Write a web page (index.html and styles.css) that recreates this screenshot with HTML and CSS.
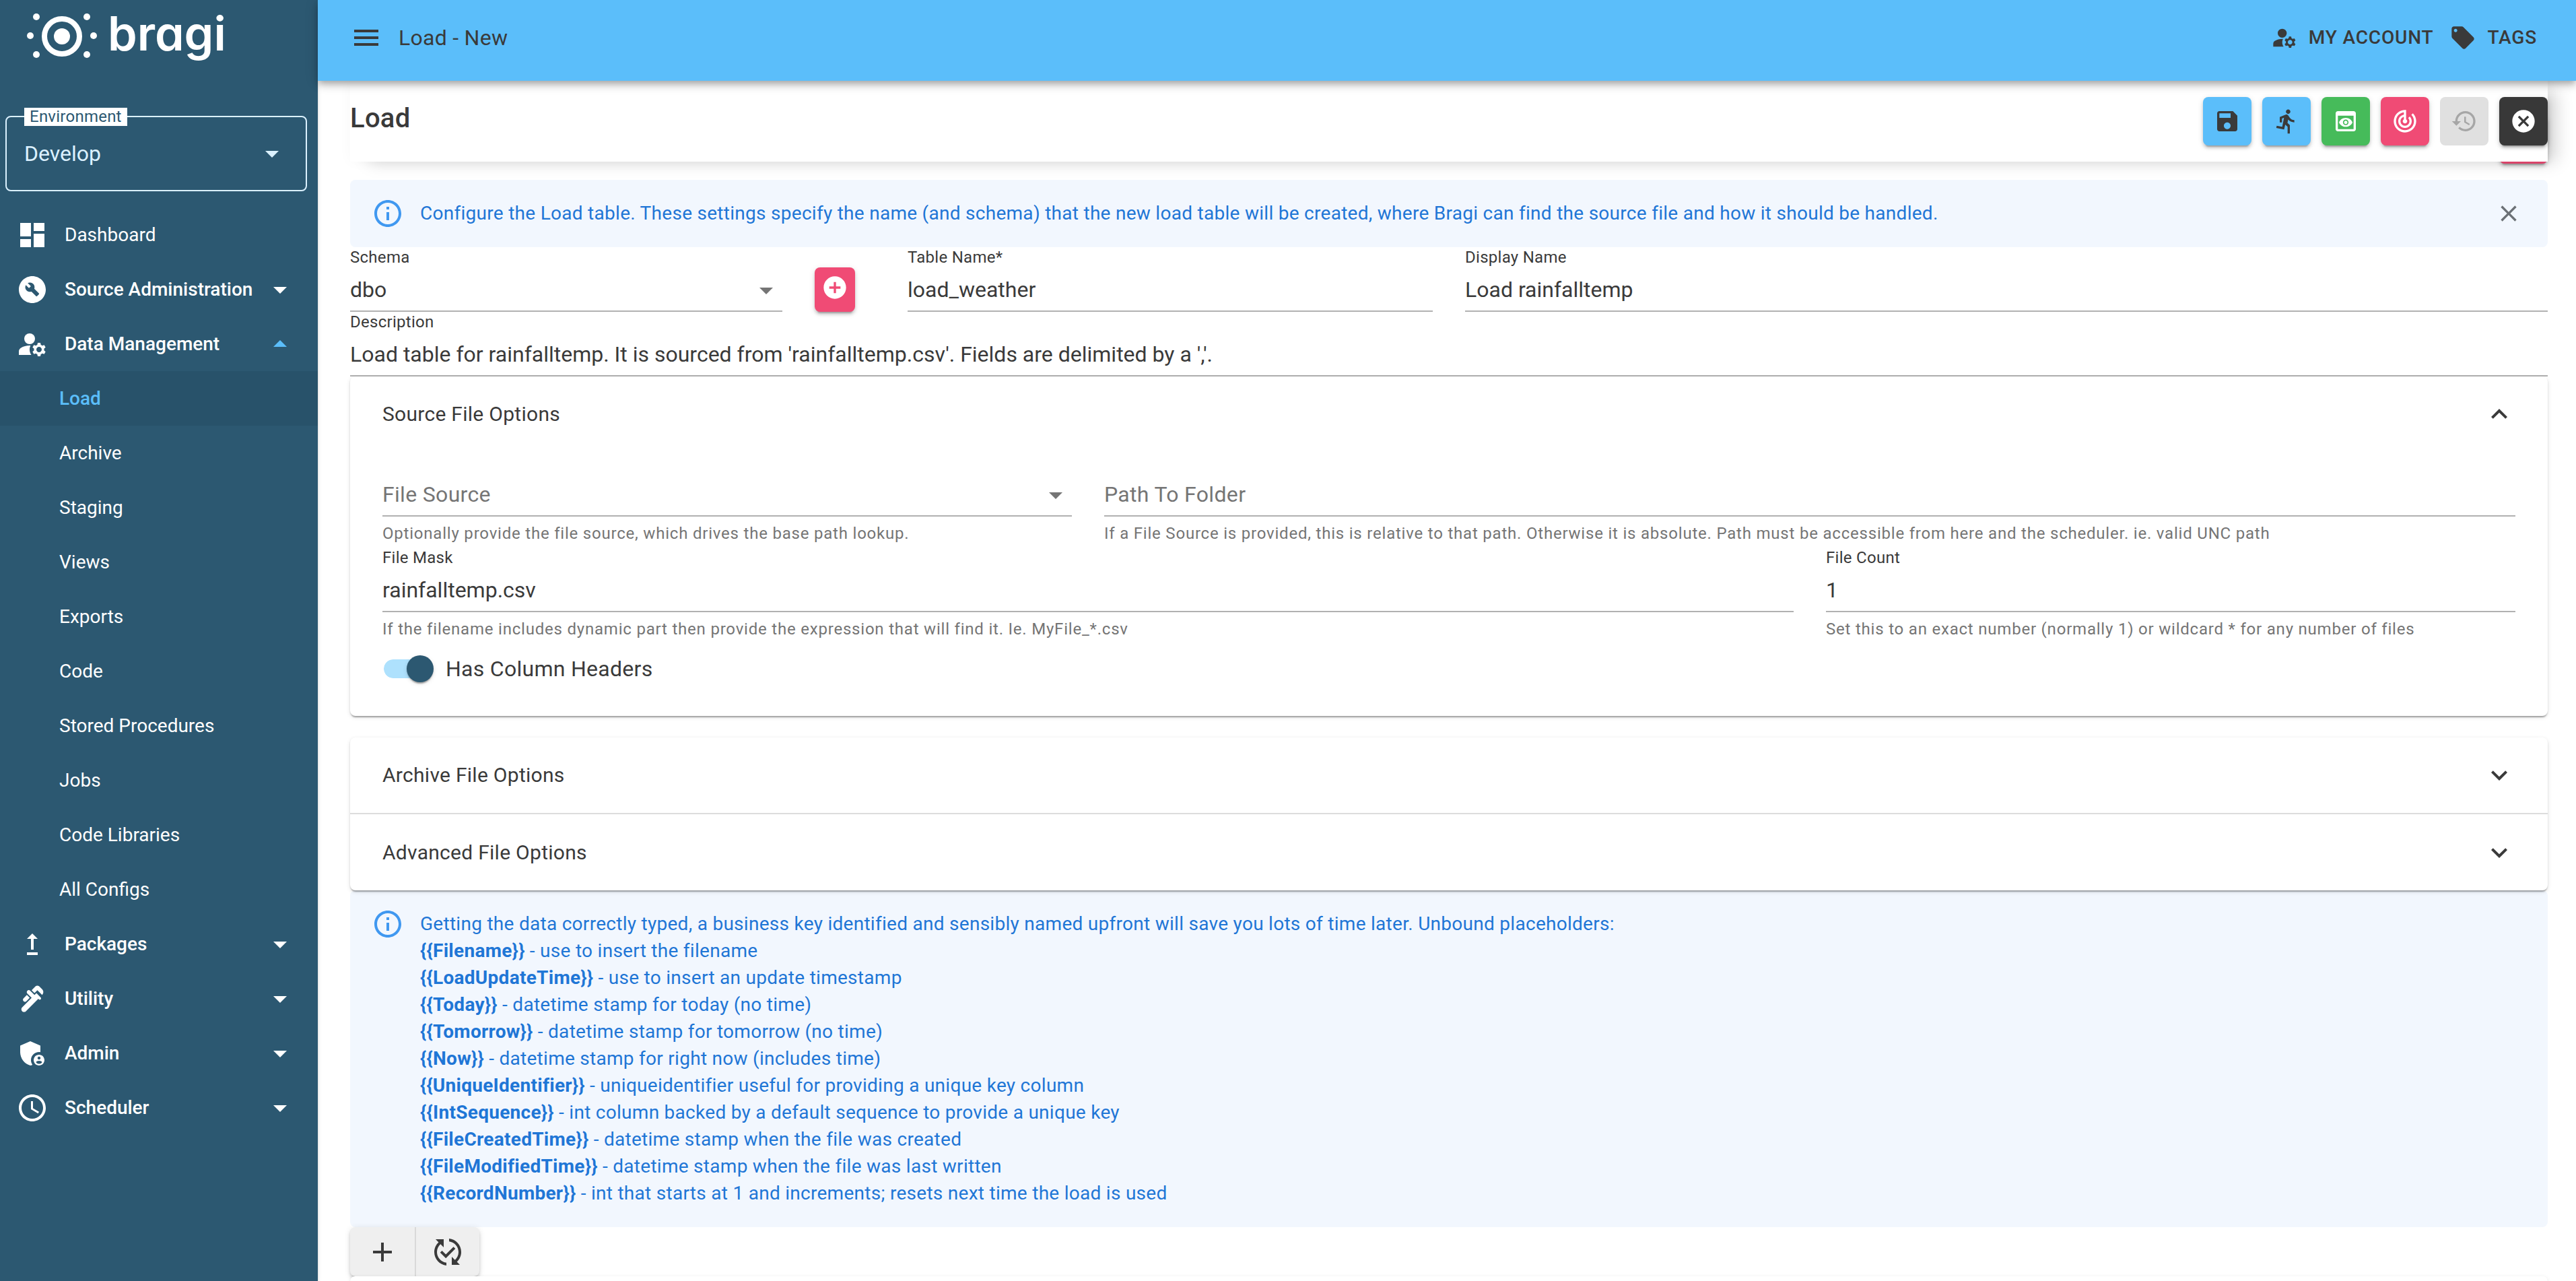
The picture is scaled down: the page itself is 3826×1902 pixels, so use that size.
FILE: index.html
```html
<!DOCTYPE html>
<html lang="en">
<head>
  <meta charset="UTF-8">
  <title>Load - New</title>
  <meta name="viewport" content="width=device-width, initial-scale=1.0">
  <link rel="stylesheet" href="styles.css">
</head>
<body>
  <!-- Icons shared by the whole page -->
  <svg class="icon-defs" aria-hidden="true">
    <symbol id="i-menu" viewBox="0 0 24 24"><path d="M3 18h18v-2H3v2zm0-5h18v-2H3v2zm0-7v2h18V6H3z"/></symbol>
    <symbol id="i-drop" viewBox="0 0 24 24"><path d="M7 10l5 5 5-5z"/></symbol>
    <symbol id="i-drop-up" viewBox="0 0 24 24"><path d="M7 14l5-5 5 5z"/></symbol>
    <symbol id="i-more" viewBox="0 0 24 24"><path d="M16.59 8.59L12 13.17 7.41 8.59 6 10l6 6 6-6z"/></symbol>
    <symbol id="i-less" viewBox="0 0 24 24"><path d="M12 8l-6 6 1.41 1.41L12 10.83l4.59 4.58L18 14z"/></symbol>
    <symbol id="i-close" viewBox="0 0 24 24"><path d="M19 6.41L17.59 5 12 10.59 6.41 5 5 6.41 10.59 12 5 17.59 6.41 19 12 13.41 17.59 19 19 17.59 13.41 12z"/></symbol>
    <symbol id="i-add" viewBox="0 0 24 24"><path d="M19 13h-6v6h-2v-6H5v-2h6V5h2v6h6v2z"/></symbol>
    <symbol id="i-dashboard" viewBox="0 0 24 24"><path d="M3 13h8V3H3v10zm0 8h8v-6H3v6zm10 0h8V11h-8v10zm0-18v6h8V3h-8z"/></symbol>
    <symbol id="i-build" viewBox="0 0 24 24"><path d="M12 2C6.48 2 2 6.48 2 12s4.48 10 10 10 10-4.48 10-10S17.52 2 12 2zm4.9 13.49-1.4 1.4c-.2.2-.51.2-.71 0l-3.41-3.41c-1.22.43-2.64.17-3.62-.81-1.11-1.11-1.3-2.79-.59-4.1l2.35 2.35 1.41-1.41-2.35-2.34c1.32-.71 2.99-.52 4.1.59.98.98 1.24 2.4.81 3.62l3.41 3.41c.19.19.19.51 0 .7z"/></symbol>
    <symbol id="i-manage" viewBox="0 0 24 24"><circle cx="10" cy="8" r="4"/><path d="M10.67 13.02c-.22-.01-.44-.02-.67-.02-2.42 0-4.68.67-6.61 1.82-.88.52-1.39 1.5-1.39 2.53V20h9.26c-.79-1.13-1.26-2.51-1.26-4 0-1.07.25-2.07.67-2.98zM20.75 16c0-.22-.03-.42-.06-.63l1.14-1.01-1-1.73-1.45.49c-.32-.27-.68-.48-1.08-.63L18 11h-2l-.3 1.49c-.4.15-.76.36-1.08.63l-1.45-.49-1 1.73 1.14 1.01c-.03.21-.06.41-.06.63s.03.42.06.63l-1.14 1.01 1 1.73 1.45-.49c.32.27.68.48 1.08.63L16 21h2l.3-1.49c.4-.15.76-.36 1.08-.63l1.45.49 1-1.73-1.14-1.01c.03-.21.06-.41.06-.63zM17 18c-1.1 0-2-.9-2-2s.9-2 2-2 2 .9 2 2-.9 2-2 2z"/></symbol>
    <symbol id="i-upgrade" viewBox="0 0 24 24"><path d="M16 18v2H8v-2h8zM11 7.99V16h2V7.99h3L12 4 8 7.99h3z"/></symbol>
    <symbol id="i-plumbing" viewBox="0 0 24 24"><path d="m19.28 4.93-2.12-2.12c-.78-.78-2.05-.78-2.83 0L11.5 5.64l2.12 2.12 2.12-2.12 3.54 3.54c1.17-1.18 1.17-3.08 0-4.25zM5.49 13.77c.59.59 1.54.59 2.12 0l2.47-2.47-2.12-2.13-2.47 2.47c-.59.59-.59 1.54 0 2.13z"/><path d="m15.04 7.76-.71.71-.71.71L10.44 6c-.59-.6-1.54-.6-2.12-.01-.59.59-.59 1.54 0 2.12l3.18 3.18-.71.71-6.36 6.36c-.78.78-.78 2.05 0 2.83.78.78 2.05.78 2.83 0L16.45 12l.35.35c.39.39 1.02.39 1.41 0 .39-.39.39-1.02 0-1.41l-3.17-3.18z"/></symbol>
    <symbol id="i-admin" viewBox="0 0 24 24"><path d="M17 11c.34 0 .67.04 1 .09V6.27L10.5 3 3 6.27v4.91c0 4.54 3.2 8.79 7.5 9.82.55-.13 1.08-.32 1.6-.55-.69-.98-1.1-2.17-1.1-3.45 0-3.31 2.69-6 6-6z"/><path d="M17 13c-2.21 0-4 1.79-4 4s1.79 4 4 4 4-1.79 4-4-1.79-4-4-4zm0 1.38c.62 0 1.12.51 1.12 1.12s-.51 1.12-1.12 1.12-1.12-.51-1.12-1.12.5-1.12 1.12-1.12zm0 5.37c-.93 0-1.74-.46-2.24-1.17.05-.72 1.51-1.08 2.24-1.08s2.19.36 2.24 1.08c-.5.71-1.31 1.17-2.24 1.17z"/></symbol>
    <symbol id="i-clock" viewBox="0 0 24 24"><path d="M11.99 2C6.47 2 2 6.48 2 12s4.47 10 9.99 10C17.52 22 22 17.52 22 12S17.52 2 11.99 2zM12 20c-4.42 0-8-3.58-8-8s3.58-8 8-8 8 3.58 8 8-3.58 8-8 8z"/><path d="M12.5 7H11v6l5.25 3.15.75-1.23-4.5-2.67z"/></symbol>
    <symbol id="i-tag" viewBox="0 0 24 24"><path d="M21.41 11.58l-9-9C12.05 2.22 11.55 2 11 2H4c-1.1 0-2 .9-2 2v7c0 .55.22 1.05.59 1.42l9 9c.36.36.86.58 1.41.58.55 0 1.05-.22 1.41-.59l7-7c.37-.36.59-.86.59-1.41 0-.55-.23-1.06-.59-1.42zM5.5 7C4.67 7 4 6.33 4 5.5S4.67 4 5.5 4 7 4.67 7 5.5 6.33 7 5.5 7z"/></symbol>
    <symbol id="i-save" viewBox="0 0 24 24"><path d="M17 3H5c-1.11 0-2 .9-2 2v14c0 1.1.89 2 2 2h14c1.1 0 2-.9 2-2V7l-4-4zm-5 16c-1.66 0-3-1.34-3-3s1.34-3 3-3 3 1.34 3 3-1.34 3-3 3zm3-10H5V5h10v4z"/></symbol>
    <symbol id="i-run" viewBox="0 0 24 24"><path d="M13.49 5.48c1.1 0 2-.9 2-2s-.9-2-2-2-2 .9-2 2 .9 2 2 2zm-3.6 13.9 1-4.4 2.1 2v6h2v-7.5l-2.1-2 .6-3c1.3 1.5 3.3 2.5 5.5 2.5v-2c-1.9 0-3.5-1-4.3-2.4l-1-1.6c-.4-.6-1-1-1.7-1-.3 0-.5.1-.8.1l-5.2 2.2v4.7h2v-3.4l1.8-.7-1.6 8.1-4.9-1-.4 2 7 1.4z"/></symbol>
    <symbol id="i-preview" viewBox="0 0 24 24"><path d="M19 3H5c-1.11 0-2 .9-2 2v14c0 1.1.89 2 2 2h14c1.1 0 2-.9 2-2V5c0-1.1-.89-2-2-2zm0 16H5V7h14v12zm-5.5-6c0 .83-.67 1.5-1.5 1.5s-1.5-.67-1.5-1.5.67-1.5 1.5-1.5 1.5.67 1.5 1.5zM12 9c-2.73 0-5.06 1.66-6 4 .94 2.34 3.27 4 6 4s5.06-1.66 6-4c-.94-2.34-3.27-4-6-4zm0 6.5c-1.38 0-2.5-1.12-2.5-2.5s1.12-2.5 2.5-2.5 2.5 1.12 2.5 2.5-1.12 2.5-2.5 2.5z"/></symbol>
    <symbol id="i-track" viewBox="0 0 24 24"><path d="m19.07 4.93-1.41 1.41C19.1 7.79 20 9.79 20 12c0 4.42-3.58 8-8 8s-8-3.58-8-8c0-4.08 3.05-7.44 7-7.93v2.02C8.16 6.57 6 9.03 6 12c0 3.31 2.69 6 6 6s6-2.69 6-6c0-1.66-.67-3.16-1.76-4.24l-1.41 1.41C15.55 9.9 16 10.9 16 12c0 2.21-1.79 4-4 4s-4-1.79-4-4c0-1.86 1.28-3.41 3-3.86v2.14c-.6.35-1 .98-1 1.72 0 1.1.9 2 2 2s2-.9 2-2c0-.74-.4-1.38-1-1.72V2h-1C6.48 2 2 6.48 2 12s4.48 10 10 10 10-4.48 10-10c0-2.76-1.12-5.26-2.93-7.07z"/></symbol>
    <symbol id="i-history" viewBox="0 0 24 24"><path d="M13 3c-4.97 0-9 4.03-9 9H1l3.89 3.89.07.14L9 12H6c0-3.87 3.13-7 7-7s7 3.13 7 7-3.13 7-7 7c-1.93 0-3.68-.79-4.94-2.06l-1.42 1.42C8.27 19.99 10.51 21 13 21c4.97 0 9-4.03 9-9s-4.03-9-9-9zm-1 5v5l4.28 2.54.72-1.21-3.5-2.08V8H12z"/></symbol>
    <symbol id="i-cancel" viewBox="0 0 24 24"><path d="M12 2C6.47 2 2 6.47 2 12s4.47 10 10 10 10-4.47 10-10S17.53 2 12 2zm5 13.59L15.59 17 12 13.41 8.41 17 7 15.59 10.59 12 7 8.41 8.41 7 12 10.59 15.59 7 17 8.41 13.41 12 17 15.59z"/></symbol>
    <symbol id="i-add-circle" viewBox="0 0 24 24"><path d="M12 2C6.48 2 2 6.48 2 12s4.48 10 10 10 10-4.48 10-10S17.52 2 12 2zm5 11h-4v4h-2v-4H7v-2h4V7h2v4h4v2z"/></symbol>
    <symbol id="i-info" viewBox="0 0 24 24"><path d="M11 7h2v2h-2zM11 11h2v6h-2zM12 2C6.48 2 2 6.48 2 12s4.48 10 10 10 10-4.48 10-10S17.52 2 12 2zm0 18c-4.41 0-8-3.59-8-8s3.59-8 8-8 8 3.59 8 8-3.59 8-8 8z"/></symbol>
    <symbol id="i-published" viewBox="0 0 24 24"><path d="m17.66 9.53-7.07 7.07-4.24-4.24 1.41-1.41 2.83 2.83 5.66-5.66 1.41 1.41zM4 12c0-2.33 1.02-4.42 2.62-5.88L9 8.5v-6H3l2.2 2.2C3.24 6.52 2 9.11 2 12c0 5.19 3.95 9.45 9 9.95v-2.02c-3.94-.49-7-3.86-7-7.93zm18 0c0-5.19-3.95-9.45-9-9.95v2.02c3.94.49 7 3.86 7 7.93 0 2.33-1.02 4.42-2.62 5.88L15 15.5v6h6l-2.2-2.2c1.96-1.82 3.2-4.41 3.2-7.3z"/></symbol>
  </svg>

  <div class="layout">
    <aside class="drawer">
      <a class="logo" href="#">
        <svg class="logo-mark" viewBox="0 0 104 64" aria-hidden="true">
          <circle cx="52" cy="32" r="26" fill="none" stroke="currentColor" stroke-width="8"/>
          <circle cx="52" cy="32" r="12"/>
          <circle cx="14" cy="3" r="5"/>
          <circle cx="5" cy="31" r="5"/>
          <circle cx="14" cy="59" r="5"/>
          <circle cx="89" cy="3" r="5"/>
          <circle cx="99" cy="31" r="5"/>
          <circle cx="89" cy="59" r="5"/>
        </svg>
        <span class="logo-text">bragi</span>
      </a>

      <div class="environment">
        <label for="environment">Environment</label>
        <select id="environment">
          <option>Develop</option>
        </select>
        <svg class="icon"><use href="#i-drop"/></svg>
      </div>

      <nav class="nav">
        <a class="nav-item" href="#"><svg class="icon"><use href="#i-dashboard"/></svg>Dashboard</a>
        <button class="nav-item nav-group" type="button"><svg class="icon"><use href="#i-build"/></svg>Source Administration<svg class="icon caret"><use href="#i-drop"/></svg></button>
        <button class="nav-item nav-group open" type="button"><svg class="icon"><use href="#i-manage"/></svg>Data Management<svg class="icon caret"><use href="#i-drop-up"/></svg></button>
        <a class="nav-item nav-child active" href="#">Load</a>
        <a class="nav-item nav-child" href="#">Archive</a>
        <a class="nav-item nav-child" href="#">Staging</a>
        <a class="nav-item nav-child" href="#">Views</a>
        <a class="nav-item nav-child" href="#">Exports</a>
        <a class="nav-item nav-child" href="#">Code</a>
        <a class="nav-item nav-child" href="#">Stored Procedures</a>
        <a class="nav-item nav-child" href="#">Jobs</a>
        <a class="nav-item nav-child" href="#">Code Libraries</a>
        <a class="nav-item nav-child" href="#">All Configs</a>
        <button class="nav-item nav-group" type="button"><svg class="icon"><use href="#i-upgrade"/></svg>Packages<svg class="icon caret"><use href="#i-drop"/></svg></button>
        <button class="nav-item nav-group" type="button"><svg class="icon"><use href="#i-plumbing"/></svg>Utility<svg class="icon caret"><use href="#i-drop"/></svg></button>
        <button class="nav-item nav-group" type="button"><svg class="icon"><use href="#i-admin"/></svg>Admin<svg class="icon caret"><use href="#i-drop"/></svg></button>
        <button class="nav-item nav-group" type="button"><svg class="icon"><use href="#i-clock"/></svg>Scheduler<svg class="icon caret"><use href="#i-drop"/></svg></button>
      </nav>
    </aside>

    <div class="page">
      <header class="appbar">
        <button class="menu-btn" type="button" aria-label="Toggle menu"><svg class="icon"><use href="#i-menu"/></svg></button>
        <span class="appbar-title">Load - New</span>
        <a class="appbar-link" href="#"><svg class="icon icon-sm"><use href="#i-manage"/></svg>MY ACCOUNT</a>
        <a class="appbar-link" href="#"><svg class="icon icon-sm"><use href="#i-tag"/></svg>TAGS</a>
      </header>

      <main class="content">
        <div class="page-header">
          <h1>Load</h1>
          <div class="actions">
            <button class="btn blue" type="button" aria-label="Save"><svg class="icon icon-sm"><use href="#i-save"/></svg></button>
            <button class="btn blue" type="button" aria-label="Run"><svg class="icon icon-sm"><use href="#i-run"/></svg></button>
            <button class="btn green" type="button" aria-label="Preview"><svg class="icon icon-sm"><use href="#i-preview"/></svg></button>
            <button class="btn pink" type="button" aria-label="Track changes"><svg class="icon icon-sm"><use href="#i-track"/></svg></button>
            <button class="btn" type="button" aria-label="History" disabled><svg class="icon icon-sm"><use href="#i-history"/></svg></button>
            <button class="btn dark" type="button" aria-label="Close"><svg class="icon icon-sm"><use href="#i-cancel"/></svg></button>
          </div>
        </div>

        <!-- Sits mostly under the page header -->
        <div class="under-header">
          <button class="btn pink" type="button" aria-label="Add"></button>
        </div>

        <div class="alert">
          <svg class="icon"><use href="#i-info"/></svg>
          <p>Configure the Load table. These settings specify the name (and schema) that the new load table will be created, where Bragi can find the source file and how it should be handled.</p>
          <button class="alert-close" type="button" aria-label="Dismiss"><svg class="icon icon-sm"><use href="#i-close"/></svg></button>
        </div>

        <div class="grid">
          <div class="col-3 schema">
            <div class="field">
              <label for="schema">Schema</label>
              <select id="schema"><option>dbo</option></select>
              <svg class="icon"><use href="#i-drop"/></svg>
            </div>
            <button class="btn pink add-schema" type="button" aria-label="Add schema"><svg class="icon icon-sm"><use href="#i-add-circle"/></svg></button>
          </div>
          <div class="field col-3">
            <label for="tableName">Table Name*</label>
            <input type="text" id="tableName" value="load_weather">
          </div>
          <div class="field col-6">
            <label for="displayName">Display Name</label>
            <input type="text" id="displayName" value="Load rainfalltemp">
          </div>
          <div class="field col-12">
            <label for="description">Description</label>
            <input type="text" id="description" value="Load table for rainfalltemp. It is sourced from 'rainfalltemp.csv'. Fields are delimited by a ','.">
          </div>
        </div>

        <section class="panel">
          <button class="panel-header" type="button">Source File Options<svg class="icon"><use href="#i-less"/></svg></button>
          <div class="panel-body">
            <div class="grid">
              <div class="field col-4">
                <label for="fileSource" class="sr-label">File Source</label>
                <select id="fileSource" class="empty"><option>File Source</option></select>
                <svg class="icon"><use href="#i-drop"/></svg>
                <p class="hint">Optionally provide the file source, which drives the base path lookup.</p>
              </div>
              <div class="field col-8">
                <label for="folderPath" class="sr-label">Path To Folder</label>
                <input type="text" id="folderPath" placeholder="Path To Folder">
                <p class="hint">If a File Source is provided, this is relative to that path. Otherwise it is absolute. Path must be accessible from here and the scheduler. ie. valid UNC path</p>
              </div>
              <div class="field col-8">
                <label for="fileMask">File Mask</label>
                <input type="text" id="fileMask" value="rainfalltemp.csv">
                <p class="hint">If the filename includes dynamic part then provide the expression that will find it. Ie. MyFile_*.csv</p>
              </div>
              <div class="field col-4">
                <label for="fileCount">File Count</label>
                <input type="text" id="fileCount" value="1">
                <p class="hint">Set this to an exact number (normally 1) or wildcard * for any number of files</p>
              </div>
            </div>
            <label class="switch">
              <input type="checkbox" checked>
              Has Column Headers
            </label>
          </div>
        </section>

        <section class="panel panel-stack">
          <button class="panel-header" type="button">Archive File Options<svg class="icon"><use href="#i-more"/></svg></button>
          <button class="panel-header" type="button">Advanced File Options<svg class="icon"><use href="#i-more"/></svg></button>
        </section>

        <div class="alert">
          <svg class="icon"><use href="#i-info"/></svg>
          <p>
            Getting the data correctly typed, a business key identified and sensibly named upfront will save you lots of time later. Unbound placeholders:<br>
            <b>{{Filename}}</b> - use to insert the filename<br>
            <b>{{LoadUpdateTime}}</b> - use to insert an update timestamp<br>
            <b>{{Today}}</b> - datetime stamp for today (no time)<br>
            <b>{{Tomorrow}}</b> - datetime stamp for tomorrow (no time)<br>
            <b>{{Now}}</b> - datetime stamp for right now (includes time)<br>
            <b>{{UniqueIdentifier}}</b> - uniqueidentifier useful for providing a unique key column<br>
            <b>{{IntSequence}}</b> - int column backed by a default sequence to provide a unique key<br>
            <b>{{FileCreatedTime}}</b> - datetime stamp when the file was created<br>
            <b>{{FileModifiedTime}}</b> - datetime stamp when the file was last written<br>
            <b>{{RecordNumber}}</b> - int that starts at 1 and increments; resets next time the load is used
          </p>
        </div>

        <div class="btn-group">
          <button type="button" aria-label="Add column"><svg class="icon"><use href="#i-add"/></svg></button>
          <button type="button" aria-label="Refresh columns"><svg class="icon"><use href="#i-published"/></svg></button>
        </div>
        <div class="columns-table"></div>
      </main>
    </div>
  </div>
</body>
</html>
```

FILE: styles.css
```css
:root {
  --drawer: #2c5871;
  --primary: #5bbefa;
  --text: #3a3a3a;
  --muted: #757575;
  --info: #1f76d6;
  --pink: #f04b75;
  --green: #46bb5a;
}
*,
*::before,
*::after {
  box-sizing: border-box;
}
body {
  margin: 0;
  font-family: Roboto, "Liberation Sans", sans-serif;
  font-size: 28px;
  line-height: 40px;
  letter-spacing: 0.01em;
  color: var(--text);
  background: #fff;
}
button,
input,
select {
  font: inherit;
  letter-spacing: inherit;
  color: inherit;
}
button {
  border: none;
  padding: 0;
  background: none;
  cursor: pointer;
}
a {
  color: inherit;
  text-decoration: none;
}
p {
  margin: 0;
}
.icon-defs {
  display: none;
}
.icon {
  width: 48px;
  height: 48px;
  flex: none;
  fill: currentColor;
}
.icon-sm {
  width: 40px;
  height: 40px;
}
.layout {
  display: flex;
  min-height: 100vh;
}

/* Drawer */
.drawer {
  width: 472px;
  flex: none;
  background: var(--drawer);
  color: #fff;
  letter-spacing: normal;
  box-shadow: 0 4px 2px -2px rgba(0, 0, 0, 0.2), 0 2px 2px rgba(0, 0, 0, 0.14), 0 2px 6px rgba(0, 0, 0, 0.12);
}
.logo {
  display: flex;
  align-items: flex-start;
  gap: 16px;
  height: 120px;
  padding: 0 40px;
}
.logo-mark {
  width: 104px;
  height: 64px;
  margin-top: 22px;
  overflow: visible;
  fill: currentColor;
}
.logo-text {
  font-family: Inter, Roboto, sans-serif;
  font-feature-settings: "cv11";
  font-size: 70px;
  font-weight: 600;
  line-height: 100px;
}
.environment {
  position: relative;
  margin: 52px 16px 24px 8px;
  color: #dbf1ff;
}
.environment label {
  position: absolute;
  top: -12px;
  left: 28px;
  padding: 0 8px;
  font-size: 24px;
  line-height: 27px;
  letter-spacing: 0.01em;
  background: #fff;
  color: var(--drawer);
}
.environment select {
  display: block;
  width: 100%;
  height: 112px;
  padding: 0 26px;
  border: 2px solid #dbf1ff;
  border-radius: 8px;
  background: none;
  font-size: 32px;
  appearance: none;
}
.environment .icon {
  position: absolute;
  right: 28px;
  top: 32px;
  pointer-events: none;
}
.nav-item {
  display: flex;
  align-items: center;
  width: 100%;
  height: 81px;
  padding: 0 32px 0 24px;
  text-align: left;
  white-space: nowrap;
}
.nav-item .icon:first-child {
  margin-right: 24px;
}
.nav-group {
  font-weight: 500;
}
.nav-child {
  padding-left: 88px;
}
.nav-item.active {
  background: #28526a;
  color: var(--primary);
  font-weight: 500;
}
.caret {
  margin-left: auto;
}
.open .caret {
  color: var(--primary);
}

/* App bar */
.page {
  flex: 1;
  min-width: 0;
  display: flex;
  flex-direction: column;
}
.appbar {
  position: relative;
  z-index: 3;
  display: flex;
  align-items: center;
  height: 120px;
  padding: 0 58px 8px 48px;
  background: var(--primary);
  box-shadow: 0 4px 8px -2px rgba(0, 0, 0, 0.2), 0 8px 10px rgba(0, 0, 0, 0.14), 0 2px 20px rgba(0, 0, 0, 0.12);
}
.menu-btn {
  display: flex;
  margin-right: 24px;
}
.appbar-title {
  margin-right: auto;
  font-size: 32px;
}
.appbar-link {
  display: flex;
  align-items: center;
  gap: 16px;
  margin-left: 24px;
  font-weight: 500;
  letter-spacing: 0.03em;
}

/* Content */
.content {
  flex: 1;
  display: flex;
  flex-direction: column;
  padding: 0 42px 0 48px;
}
.page-header {
  position: relative;
  z-index: 2;
  display: flex;
  align-items: center;
  justify-content: space-between;
  height: 120px;
  background: #fff;
  box-shadow: 0 0 20px rgba(0, 0, 0, 0.03), 20px 8px 24px -8px rgba(0, 0, 0, 0.18);
}
h1 {
  margin: 0;
  padding-bottom: 8px;
  font-size: 40px;
  font-weight: 500;
}
.actions {
  display: flex;
  gap: 16px;
}
.btn {
  display: flex;
  align-items: center;
  justify-content: center;
  width: 72px;
  height: 72px;
  border-radius: 8px;
  box-shadow: 0 6px 2px -4px rgba(0, 0, 0, 0.2), 0 4px 4px rgba(0, 0, 0, 0.14), 0 2px 10px rgba(0, 0, 0, 0.12);
}
.btn:disabled {
  background: #e0e0e0;
  color: #a6a6a6;
  box-shadow: none;
}
.blue {
  background: var(--primary);
}
.green {
  background: var(--green);
  color: #fff;
}
.pink {
  background: var(--pink);
  color: #fff;
}
.dark {
  background: #383838;
  color: #fff;
}
.under-header {
  display: flex;
  justify-content: flex-end;
  align-items: flex-end;
  height: 3px;
  margin-bottom: 24px;
}
.alert {
  display: flex;
  align-items: flex-start;
  gap: 24px;
  padding: 30px 32px;
  border-radius: 8px;
  background: #f2f7fe;
  color: var(--info);
}
.alert .icon {
  color: #4098f0;
  margin: -4px 0;
}
.alert p {
  flex: 1;
}
.alert-close {
  display: flex;
  padding: 0 6px;
}
.alert-close .icon {
  margin: 0;
  color: #6b7075;
}

/* Form fields */
.grid {
  display: grid;
  grid-template-columns: repeat(12, 1fr);
  column-gap: 48px;
}
.col-3 { grid-column: span 3; }
.col-4 { grid-column: span 4; }
.col-6 { grid-column: span 6; }
.col-8 { grid-column: span 8; }
.col-12 { grid-column: span 12; }
.schema {
  display: flex;
  align-items: flex-end;
  gap: 48px;
  padding-right: 30px;
}
.schema .field {
  flex: 1;
}
.add-schema {
  width: 60px;
  height: 66px;
  padding-bottom: 6px;
}
.field {
  position: relative;
}
.field label {
  display: block;
  height: 30px;
  font-size: 24px;
  line-height: 30px;
}
.field .sr-label {
  visibility: hidden;
}
.field input,
.field select {
  display: block;
  width: 100%;
  height: 66px;
  padding: 2px 0 0;
  border: none;
  border-bottom: 2px solid #b1b1b1;
  border-radius: 0;
  background: none;
  font-size: 32px;
  letter-spacing: normal;
  outline: none;
  appearance: none;
}
.field .empty,
.field input::placeholder {
  letter-spacing: 0.01em;
  color: var(--muted);
}
.field .icon {
  position: absolute;
  right: 0;
  top: 40px;
  color: var(--muted);
  pointer-events: none;
}
.hint {
  padding: 5px 0 1px;
  font-size: 24px;
  letter-spacing: 0.033em;
  color: var(--muted);
}

/* Expansion panels */
.panel {
  position: relative;
  margin-bottom: 32px;
  border-radius: 8px;
  background: #fff;
  box-shadow: 0 4px 2px -2px rgba(0, 0, 0, 0.2), 0 2px 2px rgba(0, 0, 0, 0.14), 0 2px 6px rgba(0, 0, 0, 0.12);
}
.panel-stack {
  margin-bottom: 0;
}
.panel-header {
  display: flex;
  align-items: center;
  justify-content: space-between;
  width: 100%;
  height: 112px;
  padding: 0 48px;
  font-size: 30px;
}
.panel-header + .panel-header {
  height: 115px;
  border-top: 2px solid #dcdcdc;
}
.panel-body {
  padding: 0 48px 32px;
}
.switch {
  display: flex;
  align-items: center;
  gap: 18px;
  height: 76px;
  font-size: 32px;
}
.switch input {
  position: relative;
  width: 74px;
  height: 28px;
  margin: 0 0 0 2px;
  border-right: 6px solid transparent;
  border-radius: 14px;
  background: #aee1fd;
  background-clip: padding-box;
  appearance: none;
}
.switch input::after {
  content: "";
  position: absolute;
  right: -6px;
  top: -6px;
  width: 40px;
  height: 40px;
  border-radius: 50%;
  background: var(--drawer);
  box-shadow: 0 4px 2px -2px rgba(0, 0, 0, 0.2), 0 2px 2px rgba(0, 0, 0, 0.14), 0 2px 6px rgba(0, 0, 0, 0.12);
}

/* Column tools */
.btn-group {
  display: flex;
  align-self: flex-start;
  border-radius: 8px;
  background: #efefef;
  box-shadow: 0 6px 2px -4px rgba(0, 0, 0, 0.2), 0 4px 4px rgba(0, 0, 0, 0.14), 0 2px 10px rgba(0, 0, 0, 0.12);
}
.btn-group button {
  display: flex;
  align-items: center;
  justify-content: center;
  width: 96px;
  height: 73px;
}
.btn-group button + button {
  border-left: 2px solid #d9d9d9;
}
.columns-table {
  position: relative;
  flex: 1;
  border-radius: 8px 8px 0 0;
  background: #fff;
  box-shadow: 0 2px 2px rgba(0, 0, 0, 0.14), 0 2px 6px rgba(0, 0, 0, 0.12);
}
```
